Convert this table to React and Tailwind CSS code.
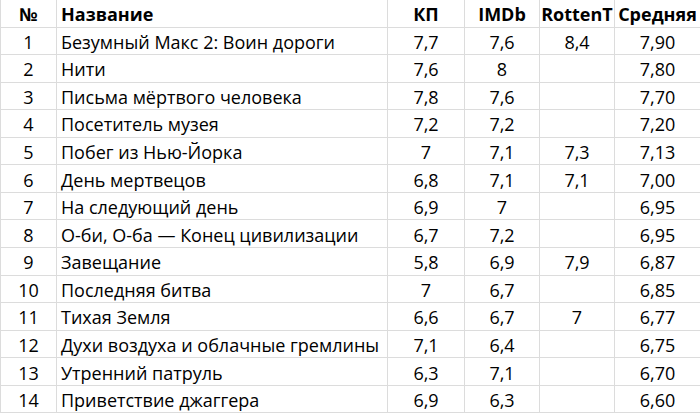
import React from "react";

const rows = [
  ["1", "Безумный Макс 2: Воин дороги", "7,7", "7,6", "8,4", "7,90"],
  ["2", "Нити", "7,6", "8", "", "7,80"],
  ["3", "Письма мёртвого человека", "7,8", "7,6", "", "7,70"],
  ["4", "Посетитель музея", "7,2", "7,2", "", "7,20"],
  ["5", "Побег из Нью-Йорка", "7", "7,1", "7,3", "7,13"],
  ["6", "День мертвецов", "6,8", "7,1", "7,1", "7,00"],
  ["7", "На следующий день", "6,9", "7", "", "6,95"],
  ["8", "О-би, О-ба — Конец цивилизации", "6,7", "7,2", "", "6,95"],
  ["9", "Завещание", "5,8", "6,9", "7,9", "6,87"],
  ["10", "Последняя битва", "7", "6,7", "", "6,85"],
  ["11", "Тихая Земля", "6,6", "6,7", "7", "6,77"],
  ["12", "Духи воздуха и облачные гремлины", "7,1", "6,4", "", "6,75"],
  ["13", "Утренний патруль", "6,3", "7,1", "", "6,70"],
  ["14", "Приветствие джаггера", "6,9", "6,3", "", "6,60"],
];

const cellBase = "flex items-center border-b border-[#dcdcdc] pt-[2px] whitespace-nowrap overflow-hidden";

function Row({ cells, header }) {
  const h = header ? "h-[27.5px]" : "h-[27.57px]";
  const weight = header ? "font-bold" : "font-normal";
  return (
    <>
      <div className={`${cellBase} ${h} ${weight} justify-center border-l border-r`}>{cells[0]}</div>
      <div className={`${cellBase} ${h} ${weight} justify-start pl-[4px] border-r`}>{cells[1]}</div>
      <div className={`${cellBase} ${h} ${weight} justify-center border-r`}>{cells[2]}</div>
      <div className={`${cellBase} ${h} ${weight} justify-center border-r`}>{cells[3]}</div>
      <div className={`${cellBase} ${h} ${weight} justify-center border-r`}>{cells[4]}</div>
      <div className={`${cellBase} ${h} ${weight} justify-center`}>{cells[5]}</div>
    </>
  );
}

export default function App() {
  return (
    <div className="w-[700px] h-[415px] bg-white overflow-hidden text-black text-[18px] leading-none font-['Open_Sans',sans-serif]">
      <div className="grid grid-cols-[57px_331px_77px_75px_75px_85px]">
        <Row header cells={["№", "Название", "КП", "IMDb", "RottenT", "Средняя"]} />
        {rows.map((r) => (
          <Row key={r[0]} cells={r} />
        ))}
      </div>
    </div>
  );
}
